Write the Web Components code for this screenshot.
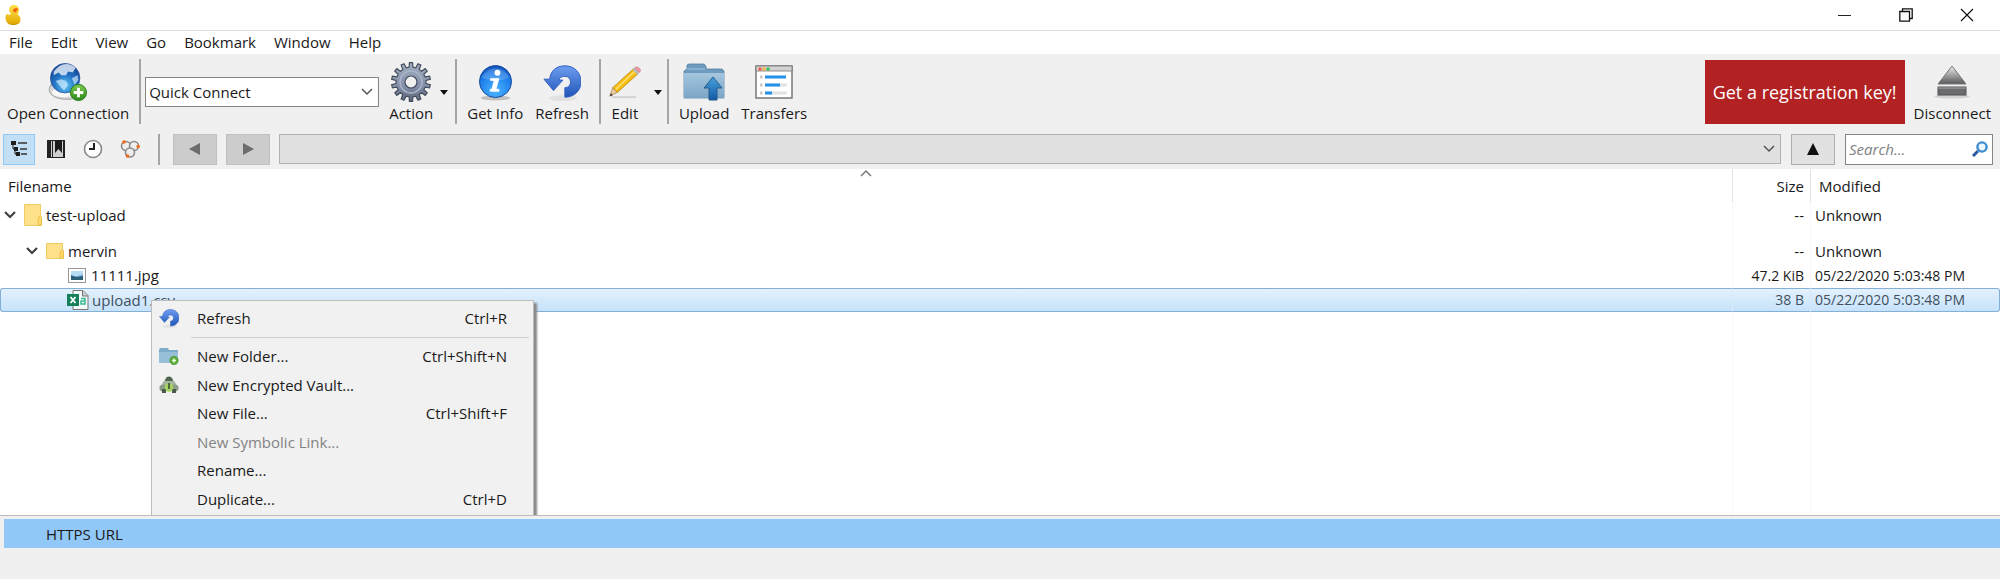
<!DOCTYPE html>
<html lang="en">
<head>
<meta charset="utf-8">
<title>Cyberduck</title>
<style>
  body { margin: 0; background: #f0f0f0; font: 15px/20px "Open Sans", "Noto Sans", sans-serif; color: #1a1a1a; }
</style>
</head>
<body>
<duck-app></duck-app>

<script>
// Toothed outline of the action gear.
function gearPath(c, teeth, outer, inner) {
  const pts = [];
  for (let i = 0; i < teeth; i++) {
    [[-0.28, inner], [-0.18, outer], [0.18, outer], [0.28, inner]].forEach(([o, r]) => {
      const a = ((i + o) / teeth) * Math.PI * 2 - Math.PI / 2;
      pts.push((c + r * Math.cos(a)).toFixed(2) + ' ' + (c + r * Math.sin(a)).toFixed(2));
    });
  }
  return 'M' + pts.join('L') + 'Z';
}

const refreshShape = '<defs><linearGradient id="g" x2="0" y2="1"><stop stop-color="#6f9df0"/><stop offset="1" stop-color="#1f56b8"/></linearGradient></defs><ellipse cx="21" cy="37" rx="15" ry="3" fill="#000" opacity=".06"/><path d="M7 17C8 8 14 3 23 3c10 0 17 7 17 17 0 9-7 16-17 16V26c4 0 6-3 6-6s-2-6-6-6-6 2-6 4h4L11 29 1 17z" fill="url(#g)" stroke="#2d5fc0" stroke-width="1"/>';

const ICONS = {
  duck: ['0 1 16 20', '<defs><linearGradient id="g" x2="0" y2="1"><stop stop-color="#ffe14a"/><stop offset="1" stop-color="#e2a800"/></linearGradient></defs><path d="M.5 14c0-2 .5-4 1.500-4 1 1 3 1 4 0 0-1-2-2-2-4 0-3 2-5 5-5s5 2 5 5c0 2-1 3-1.500 4.500 2.500 1 3 3 3 5.500 0 3-3 5-7.500 5S.5 18 .5 14z" fill="url(#g)"/><path d="M8 6c1-2 4-3 5-1l-2 3c-1 1-3 0-3-2z" fill="#f0640f"/><path d="M2 18q6 4 12 0-2 3-6 3t-6-3z" fill="#b98400" opacity=".6"/>'],
  globe: ['0 0 42 42', '<defs><radialGradient id="g" cx=".5" cy=".75" r=".75"><stop stop-color="#5fc8f5"/><stop offset=".5" stop-color="#2372c4"/><stop offset="1" stop-color="#123f8e"/></radialGradient><linearGradient id="h" x2="0" y2="1"><stop stop-color="#7ccb4c"/><stop offset="1" stop-color="#2c8a1c"/></linearGradient></defs><path d="M3 24c-3 5-2 9 3 12 7 4 18 4 26 1l1-8z" fill="#d6d6d6" stroke="#9b9b9b"/><ellipse cx="17" cy="32" rx="13" ry="5" fill="#f8f8f8"/><circle cx="18" cy="17" r="15.500" fill="url(#g)" stroke="#29509a" stroke-width=".7"/><path d="M6 10c4-5 8-8 13-8 4 0 8 2 10 4l-3 5-5-1-2 4-5 0-3-3-5 3z" fill="#e9f1fa" opacity=".8"/><path d="M8 20l6-2 5 2 2 4-4 6-3-3zM25 17l6-3 1 5-4 5z" fill="#d8efff" opacity=".65"/><circle cx="32" cy="32" r="8.500" fill="url(#h)" stroke="#257a1a"/><path d="M32 27v10M27 32h10" stroke="#fff" stroke-width="3"/>'],
  gear: ['0 0 40 40', '<defs><linearGradient id="g" x2="0" y2="1"><stop stop-color="#a2aec0"/><stop offset=".6" stop-color="#8490aa"/><stop offset="1" stop-color="#5b6475"/></linearGradient></defs><path fill-rule="evenodd" d="' + gearPath(20, 14, 19.5, 15) + 'M20 14a6 6 0 1 0 0 12 6 6 0 1 0 0-12Z" fill="url(#g)" stroke="#444d5d" stroke-width="1.200"/><circle cx="20" cy="20" r="11" fill="none" stroke="#aab5c8" stroke-width="1.500"/>'],
  info: ['0 0 36 38', '<defs><radialGradient id="g" cx=".5" cy=".8" r=".8"><stop stop-color="#4cb6ff"/><stop offset=".7" stop-color="#1b7bea"/><stop offset="1" stop-color="#0f4cb4"/></radialGradient></defs><ellipse cx="18" cy="35" rx="15" ry="2.500" fill="#000" opacity=".2"/><circle cx="18" cy="18" r="16.500" fill="url(#g)" stroke="#174b9c"/><path d="M4 14a14.500 13 0 0 1 28 0q-14 6-28 0z" fill="#fff" opacity=".18"/><circle cx="20" cy="9" r="3" fill="#fff"/><path d="M13 15h8.500l-3 11h3v2h-9v-2h1.800l2.300-9H13z" fill="#fff" stroke="#fff" stroke-width=".8"/>'],
  refresh: ['0 0 40 40', refreshShape],
  pencil: ['0 0 36 36', '<path d="M4 34h26" stroke="#000" opacity=".12" stroke-width="2"/><path d="M2 33l3-9 5 5z" fill="#e8c9a0" stroke="#a27a4a" stroke-width=".7"/><path d="M2 33l1-3 2 2z" fill="#333"/><path d="M5 24L27 4l5 5-22 20z" fill="#f6bd13" stroke="#b3830f" stroke-width=".8"/><path d="M8 26L29 6" stroke="#ffe27a" stroke-width="1.500"/><path d="M26 5l2-2 5 5-2 2z" fill="#b9bcc2"/><path d="M28 3c3-3 9 2 5 5z" fill="#ee9aa5" stroke="#bd7280" stroke-width=".6"/>'],
  upload: ['0 0 42 38', '<defs><linearGradient id="g" x2="0" y2="1"><stop stop-color="#a5c6dd"/><stop offset="1" stop-color="#7ba5c7"/></linearGradient><linearGradient id="h" x2="0" y2="1"><stop stop-color="#49a2dc"/><stop offset="1" stop-color="#1259a5"/></linearGradient></defs><path d="M1 35V8l3-2V2l2-1h15l2 2v3h16l2 2v27z" fill="#6d9cbe" stroke="#55829f" stroke-width=".8"/><path d="M1 10h40v25H1z" fill="url(#g)"/><path d="M4 6h18" stroke="#9fc6df"/><path d="M30 14l9 11h-5v12h-8V25h-5z" fill="url(#h)" stroke="#255d8c"/>'],
  transfers: ['0 0 38 34', '<rect x="1" y="1" width="36" height="32" fill="#fff" stroke="#777" stroke-width="1.500"/><path d="M1 1h36v5H1z" fill="#d3d3d3" stroke="#777" stroke-width=".8"/><circle cx="5" cy="4" r="1.700" fill="#ee5a4e"/><circle cx="9" cy="4" r="1.700" fill="#f4b53d"/><circle cx="13" cy="4" r="1.700" fill="#35c15b"/><path d="M10 20h22M10 28h22" stroke="#e2e2e2" stroke-width="3"/><path d="M10 12h21M10 20h15M10 28h7" stroke="#2391ea" stroke-width="3.200"/><path d="M5 12h2.500M5 20h2.500M5 28h2.500" stroke="#c9c9c9" stroke-width="3"/>'],
  eject: ['0 0 36 34', '<defs><linearGradient id="g" x2="0" y2="1"><stop stop-color="#ededed"/><stop offset="1" stop-color="#58585b"/></linearGradient></defs><ellipse cx="18" cy="31.500" rx="18" ry="2" fill="#000" opacity=".12"/><path d="M18 1l14 18H4z" fill="url(#g)" stroke="#77777a"/><rect x="4" y="22" width="28" height="8" fill="#6b6b6f" stroke="#4f4f52"/><path d="M4 23h28" stroke="#aaa"/>'],
  tree: ['0 0 18 18', '<path d="M1 1h5v4H1zM4 7h4v4H4zM6 12h4v4H6z" fill="#1d1d1d"/><path d="M3 5v4h2M5 9v5h2" stroke="#1d1d1d" fill="none"/><path d="M8 3h9M10 9h7M11 14h6" stroke="#333" stroke-width="1.600"/>'],
  book: ['0 0 18 18', '<path d="M0 0h18v18H0z" fill="#222"/><path d="M4 1h1v16H4zM6 1h10v16H6z" fill="#cfcfcf"/><path d="M8 0h7v13l-3.500-4L8 13z" fill="#1b1b1b"/>'],
  clock: ['0 0 20 20', '<circle cx="10" cy="10" r="8.500" fill="#fff" stroke="#8a8a8a" stroke-width="1.600"/><path d="M11 4v6H6" fill="none" stroke="#222" stroke-width="2"/>'],
  bonjour: ['0 0 20 20', '<g fill="#eee" stroke="#8c8c8c" stroke-width="1.600"><circle cx="6" cy="7" r="4.500"/><circle cx="14" cy="7" r="4.500"/><circle cx="10" cy="13.500" r="4.500"/></g><g fill="#f26a1b"><circle cx="4" cy="3" r="1.800"/><circle cx="18.200" cy="7.500" r="1.800"/><circle cx="7.500" cy="17" r="1.800"/></g>'],
  lens: ['0 0 16 16', '<path d="M1 15l5-5" stroke="#2b58a3" stroke-width="3"/><circle cx="10" cy="6" r="4.600" fill="#eef6fd" stroke="#3d8ed0" stroke-width="2.400"/>'],
  chevron: ['0 0 12 8', '<path d="M1 1l5 5 5-5" fill="none" stroke="#555" stroke-width="1.500"/>'],
  expand: ['0 0 12 8', '<path d="M1 1l5 5 5-5" fill="none" stroke="#404040" stroke-width="2.200"/>'],
  sort: ['0 0 12 8', '<path d="M1 7l5-5 5 5" fill="none" stroke="#777" stroke-width="1.500"/>'],
  left: ['0 0 12 12', '<path d="M11 0v12L0 6z" fill="#6c6c6c"/>'],
  right: ['0 0 12 12', '<path d="M1 0v12l11-6z" fill="#6c6c6c"/>'],
  up: ['0 0 12 12', '<path d="M0 12h12L6 0z" fill="#111"/>'],
  caret: ['0 0 8 5', '<path d="M0 0h8L4 5z" fill="#111"/>'],
  folder: ['0 0 18 22', '<path d="M.5 .5h16v12l1 1v8H.5z" fill="#ffe18c" stroke="#efcb62"/><path d="M14 21v-7l2-2 1.500 1v8z" fill="#ffd767" stroke="#e6bd4d" stroke-width=".8"/>'],
  folderSmall: ['0 0 18 16', '<path d="M.5 .5h16v6l1 1v8H.5z" fill="#ffe18c" stroke="#efcb62"/><path d="M14 15V9l2-2 1.500 1v7z" fill="#ffd767" stroke="#e6bd4d" stroke-width=".8"/>'],
  picture: ['0 0 18 15', '<rect x=".5" y=".5" width="17" height="14" fill="#fff" stroke="#999"/><path d="M3 3h12v9H3z" fill="#7db7e8"/><path d="M3 3h12v3q-6 3-12 2z" fill="#b9dcf5"/><path d="M3 7l5 2 7-1v4H3z" fill="#2c5f78"/>'],
  csv: ['0 0 22 20', '<path d="M6 .5h10l5 5v14H6z" fill="#f7fafa" stroke="#777"/><path d="M15.500 1v5H21" fill="#ccc" stroke="#777"/><rect x="0" y="4" width="12" height="12" fill="#15805a"/><path d="M3.500 7l5 6M8.500 7l-5 6" stroke="#fff" stroke-width="1.800"/><path d="M14 8.500h4V14h-4v-3h4" fill="none" stroke="#35bd92" stroke-width="1.500"/>'],
  newFolder: ['0 0 20 18', '<path d="M0 16V3l1-2h8l1 2h9v13z" fill="#7eabc9"/><path d="M0 5h19v11H0z" fill="#97bfd8"/><circle cx="15" cy="13.500" r="4.200" fill="#5fae3c" stroke="#3d8a28" stroke-width=".6"/><path d="M15 11.500v4M13 13.500h4" stroke="#e9f9e0" stroke-width="1.500"/>'],
  vault: ['0 0 20 18', '<path d="M3 9a7 6 0 0 1 14 0v6H3z" fill="#a5b6a0"/><path d="M6 5a4 4.500 0 0 1 8 0z" fill="#50684e"/><circle cx="4" cy="12" r="3.600" fill="#8b9c88"/><circle cx="16" cy="12" r="3.600" fill="#8b9c88"/><path d="M3 13h4v4H3zM13 13h4v4h-4z" fill="#4a5c48"/><circle cx="10" cy="11.500" r="4.200" fill="#a6d35f"/><path d="M10 7v6" stroke="#4d6643" stroke-width="2"/>'],
  minimize: ['0 0 14 14', '<path d="M0 7.500h13" stroke="#222"/>'],
  restore: ['0 0 14 14', '<path d="M.8 3.500h9.700v9.700H.8zM3.500 3V.8h9.700v9.700H11" fill="none" stroke="#111" stroke-width="1.300"/>'],
  close: ['0 0 14 14', '<path d="M1 1l12 12M13 1L1 13" stroke="#111" stroke-width="1.200"/>']
};

function define(name, css, html, connected) {
  const template = document.createElement('template');
  template.innerHTML = '<style>*{box-sizing:border-box}button,input,select{font:inherit;color:inherit;margin:0}' + css + '</style>' + html;
  customElements.define(name, class extends HTMLElement {
    constructor() {
      super();
      this.attachShadow({ mode: 'open' }).append(template.content.cloneNode(true));
    }
    connectedCallback() { if (connected) connected.call(this, this.shadowRoot); }
  });
}

define('ui-icon', ':host{display:inline-block;flex:none;line-height:0}', '<span></span>', function (root) {
  const [box, body] = ICONS[this.getAttribute('name')];
  const [, , w, h] = box.split(' ');
  const width = this.getAttribute('width') || w;
  const height = Math.round(width * h / w);
  root.querySelector('span').innerHTML =
    `<svg aria-hidden="true" width="${width}" height="${height}" viewBox="${box}">${body}</svg>`;
});

define('title-bar', `
  :host{display:flex;align-items:center;justify-content:space-between;height:31px;padding:0 10px 0 5px;background:#fff;border-bottom:1px solid #dcdcdc}
  nav{display:flex;gap:14px}
  button{display:grid;place-items:center;width:47px;height:28px;padding:0;border:0;background:none}`, `
  <ui-icon name="duck"></ui-icon>
  <nav aria-label="Window">
    <button aria-label="Minimize"><ui-icon name="minimize"></ui-icon></button>
    <button aria-label="Restore"><ui-icon name="restore"></ui-icon></button>
    <button aria-label="Close"><ui-icon name="close"></ui-icon></button>
  </nav>`);

define('menu-bar', ':host{display:flex;gap:18px;padding:1px 9px 2px;background:#fff}', '<slot></slot>');
define('menu-entry', ':host{display:block}button{display:block;padding:0;border:0;background:none;line-height:20px}',
  '<button><slot></slot></button>');

define('tool-button', `
  :host{display:block}
  button{display:flex;flex-direction:column;align-items:center;padding:3px 6px 0;border:0;background:none;white-space:nowrap}
  :host([compact]) button{padding:3px 0 0;width:40px}
  .art{display:grid;place-items:center;height:40px}
  .label{line-height:22px}`,
  '<button><span class="art"><slot name="icon"></slot></span><span class="label"><slot></slot></span></button>');

define('tool-caret', ':host{display:grid;align-items:center}button{padding:0 1px;border:0;background:none;line-height:0}',
  '<button aria-label="More"><ui-icon name="caret"></ui-icon></button>');

define('tool-rule', ':host{display:block;width:2px;margin:0 4px;background:#a6a6a6}', '');

define('drop-down', `
  :host{display:grid;align-items:center}
  select,ui-icon{grid-area:1/1}
  select{appearance:none;width:100%;height:30px;padding:0 3px;border:1px solid #858585;border-radius:0;background:#fff;outline:0}
  ui-icon{justify-self:end;margin-right:6px;pointer-events:none}
  :host([muted]) select{background:#e0e0e0;border-color:#b2b2b2}`,
  '<select><option></option></select><ui-icon name="chevron"></ui-icon>', function (root) {
    root.querySelector('option').textContent = this.getAttribute('value') || '';
    root.querySelector('select').setAttribute('aria-label', this.getAttribute('label'));
  });

define('main-toolbar', `
  :host{display:flex;padding:5px 3px 5px 1px;background:#f0f0f0}
  .quick{width:234px;margin:0 4px 0 0}
  .near{margin-right:2px}
  .wide{margin-left:8px}
  .space{flex:1}
  .key{align-self:start;height:64px;margin:1px 3px 0 0;padding:0 8px;border:0;background:#b22222;color:#fff;font-size:18px;white-space:nowrap}`, `
  <tool-button><ui-icon slot="icon" name="globe" width="40"></ui-icon>Open Connection</tool-button>
  <tool-rule></tool-rule>
  <drop-down class="quick" value="Quick Connect" label="Quick Connect"></drop-down>
  <tool-button><ui-icon slot="icon" name="gear"></ui-icon>Action</tool-button>
  <tool-caret class="near"></tool-caret>
  <tool-rule></tool-rule>
  <tool-button><ui-icon slot="icon" name="info" width="35"></ui-icon>Get Info</tool-button>
  <tool-button><ui-icon slot="icon" name="refresh" width="38"></ui-icon>Refresh</tool-button>
  <tool-rule></tool-rule>
  <tool-button compact><ui-icon slot="icon" name="pencil" width="34"></ui-icon>Edit</tool-button>
  <tool-caret class="wide"></tool-caret>
  <tool-rule></tool-rule>
  <tool-button><ui-icon slot="icon" name="upload"></ui-icon>Upload</tool-button>
  <tool-button><ui-icon slot="icon" name="transfers"></ui-icon>Transfers</tool-button>
  <span class="space"></span>
  <button class="key">Get a registration key!</button>
  <tool-button><ui-icon slot="icon" name="eject"></ui-icon>Disconnect</tool-button>`);

define('path-bar', `
  :host{display:flex;align-items:center;height:40px;padding:0 7px 0 3px;background:#f0f0f0}
  button{display:grid;place-items:center;padding:0;border:1px solid transparent;background:none}
  .view{width:32px;height:31px;margin-right:5px}
  .on{background:#c2dff5;border-color:#90c8f6}
  tool-rule{height:31px;margin:0 13px 0 7px}
  .nav{width:44px;height:31px;margin-right:9px;background:#ccc;border-color:#bfbfbf}
  .up{margin:0 10px;background:#e1e1e1;border-color:#adadad}
  drop-down{flex:1}
  label{display:flex;align-items:center;width:148px;height:31px;padding:0 4px 0 3px;border:1px solid #858585;background:#fff}
  input{flex:1;min-width:0;padding:0;border:0;outline:0;background:none}
  input::placeholder{color:#808080;font-style:italic;opacity:1}`, `
  <button class="view on" aria-label="Outline"><ui-icon name="tree"></ui-icon></button>
  <button class="view" aria-label="Bookmarks"><ui-icon name="book"></ui-icon></button>
  <button class="view" aria-label="History"><ui-icon name="clock"></ui-icon></button>
  <button class="view" aria-label="Bonjour"><ui-icon name="bonjour"></ui-icon></button>
  <tool-rule></tool-rule>
  <button class="nav" aria-label="Back"><ui-icon name="left"></ui-icon></button>
  <button class="nav" aria-label="Forward"><ui-icon name="right"></ui-icon></button>
  <drop-down muted label="Path"></drop-down>
  <button class="nav up" aria-label="Parent folder"><ui-icon name="up"></ui-icon></button>
  <label><input type="text" aria-label="Search" placeholder="Search..."><ui-icon name="lens"></ui-icon></label>`);

define('file-table', `
  :host{display:block;background:#fff}
  table{width:100%;border-spacing:0;table-layout:fixed}
  .c1{width:78px}.c2{width:190px}
  th,td{padding:0;font-weight:400;text-align:left;white-space:nowrap;vertical-align:top}
  th{height:33px;padding:7px 8px 0;line-height:20px}
  th+th{border-left:1px solid #e2e2e2}
  td{height:24px;line-height:24px}
  td:nth-child(2),th:nth-child(2){text-align:right;padding-right:6px}
  td:nth-child(3){padding-left:4px}
  .jpg td+td,.csv td+td{font-size:14px}
  td+td{border-left:1px solid #f6f9fc}
  .name{display:flex;align-items:center;gap:4px;height:24px}
  .root td{height:37px;line-height:26px}
  .root .name{height:26px;padding-left:4px}
  .dir .name{padding-left:26px}
  .jpg td{height:25px;line-height:25px}
  .jpg .name{padding-left:68px;gap:5px}
  .csv .name{padding-left:66px;height:22px;gap:3px}
  .name ui-icon[name=expand]{margin-right:4px}
  .csv td{background:linear-gradient(#e3f1fd,#c6e2fb);border-top:1px solid #84b0d6;border-bottom:1px solid #84b0d6;line-height:22px;color:#41505e}
  .csv td:first-child{border-left:1px solid #84b0d6;border-radius:3px 0 0 3px}
  .csv td:nth-child(n+2){border-left-color:#d5e8f8}
  .csv td:last-child{border-right:1px solid #84b0d6;border-radius:0 3px 3px 0}
  .fill td{height:203px}`, `
  <table>
    <colgroup><col><col class="c1"><col class="c2"></colgroup>
    <thead><tr><th>Filename</th><th>Size</th><th>Modified</th></tr></thead>
    <tbody>
      <tr class="root"><td><div class="name"><ui-icon name="expand"></ui-icon><ui-icon name="folder"></ui-icon>test-upload</div></td><td>--</td><td>Unknown</td></tr>
      <tr class="dir"><td><div class="name"><ui-icon name="expand"></ui-icon><ui-icon name="folderSmall"></ui-icon>mervin</div></td><td>--</td><td>Unknown</td></tr>
      <tr class="jpg"><td><div class="name"><ui-icon name="picture"></ui-icon>11111.jpg</div></td><td>47.2 KiB</td><td>05/22/2020 5:03:48 PM</td></tr>
      <tr class="csv"><td><div class="name"><ui-icon name="csv"></ui-icon>upload1.csv</div></td><td>38 B</td><td>05/22/2020 5:03:48 PM</td></tr>
      <tr class="fill"><td></td><td></td><td></td></tr>
    </tbody>
  </table>`);

define('menu-item', `
  :host{display:grid}
  button{display:grid;grid-template-columns:45px 1fr auto;align-items:center;padding:0 26px 0 0;border:0;background:none;text-align:left;white-space:nowrap}
  .art{padding-left:7px;line-height:0}
  button:disabled{color:#838383}`,
  '<button><span class="art"><slot name="icon"></slot></span><span><slot></slot></span><slot name="keys"></slot></button>',
  function (root) { root.querySelector('button').disabled = this.hasAttribute('disabled'); });

define('context-menu', `
  :host{display:block;width:383px;padding-top:3px;background:#f1f1f1;border:1px solid #bdbdbd;box-shadow:3px 3px 2px #888}
  .first{height:28px}
  hr{margin:5px 4px 4px 39px;border:0;border-top:1px solid #cfcfcf}
  .group{display:grid;grid-auto-rows:1fr;height:171px}`, `
  <menu-item class="first"><ui-icon slot="icon" name="refresh" width="20"></ui-icon>Refresh<span slot="keys">Ctrl+R</span></menu-item>
  <hr>
  <div class="group">
    <menu-item><ui-icon slot="icon" name="newFolder"></ui-icon>New Folder...<span slot="keys">Ctrl+Shift+N</span></menu-item>
    <menu-item><ui-icon slot="icon" name="vault"></ui-icon>New Encrypted Vault...</menu-item>
    <menu-item>New File...<span slot="keys">Ctrl+Shift+F</span></menu-item>
    <menu-item disabled>New Symbolic Link...</menu-item>
    <menu-item>Rename...</menu-item>
    <menu-item>Duplicate...<span slot="keys">Ctrl+D</span></menu-item>
  </div>
  <div class="group"></div>`);

define('status-band', `
  :host{display:block;padding:3px 0 30px 4px;border-top:1px solid #bcbcbc;background:#f0f0f0}
  button{display:block;width:100%;height:29px;padding:0 42px;border:0;background:#91c8f7;text-align:left}`,
  '<button><slot></slot></button>');

define('duck-app', `
  :host{display:block}
  .browser{position:relative;overflow:hidden}
  .browser context-menu{position:absolute;left:151px;top:131px}
  .sort{position:absolute;left:calc(50% - 140px);top:0;line-height:0}`, `
  <title-bar></title-bar>
  <menu-bar>
    <menu-entry>File</menu-entry><menu-entry>Edit</menu-entry><menu-entry>View</menu-entry><menu-entry>Go</menu-entry>
    <menu-entry>Bookmark</menu-entry><menu-entry>Window</menu-entry><menu-entry>Help</menu-entry>
  </menu-bar>
  <main-toolbar></main-toolbar>
  <path-bar></path-bar>
  <div class="browser">
    <file-table></file-table>
    <ui-icon class="sort" name="sort"></ui-icon>
    <context-menu></context-menu>
  </div>
  <status-band>HTTPS URL</status-band>`);
</script>
</body>
</html>
